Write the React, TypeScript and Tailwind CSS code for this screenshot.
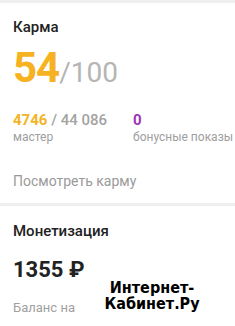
import React from 'react';

const App: React.FC = () => {
  return (
    <div className="w-[235px] h-[326px] overflow-hidden bg-[#efefef] pt-[3px] flex flex-col gap-[3px] font-['Roboto',sans-serif]">
      {/* karma */}
      <div className="bg-white h-[200px] shrink-0 px-[13px] pt-[14px] flex flex-col">
        <h2 className="text-[15px] leading-[20px] font-medium text-[#222]">Карма</h2>
        <div className="mt-[10px] leading-[42px] flex items-baseline">
          <span className="text-[42px] font-bold tracking-[-1px] text-[#f6b220]">54</span>
          <span className="text-[28px] text-[#b5b5b5]">/100</span>
        </div>
        <div className="mt-[17px] flex">
          <div className="w-[120px] shrink-0">
            <div className="text-[15px] leading-[18px] font-medium">
              <span className="font-bold text-[#f2b526]">4746</span>
              <span className="text-[#a3a3a3]"> / 44 086</span>
            </div>
            <div className="text-[12px] leading-[16px] text-[#9e9e9e]">мастер</div>
          </div>
          <div className="whitespace-nowrap">
            <div className="text-[15px] leading-[18px] font-bold text-[#9c34b5]">0</div>
            <div className="text-[12px] leading-[16px] text-[#9e9e9e]">бонусные показы</div>
          </div>
        </div>
        <div className="mt-[26px] text-[14px] leading-[20px] text-[#9a9a9a]">Посмотреть карму</div>
      </div>

      {/* monetization */}
      <div className="relative bg-white flex-1 px-[13px] pt-[15px] flex flex-col">
        <h2 className="text-[15px] leading-[20px] font-medium text-[#222]">Монетизация</h2>
        <div className="mt-[15px] text-[22px] leading-[28px] font-bold text-[#222]">1355 ₽</div>
        <div className="mt-[15px] text-[13px] leading-[18px] text-[#a0a0a0]">Баланс на</div>

        <div className="absolute left-[100px] top-[74px] w-[104px] text-center font-['DejaVu_Sans',sans-serif] font-bold [font-stretch:condensed] text-[16px] leading-[16px] text-black">
          <div>Интернет-</div>
          <div>Кабинет.Ру</div>
        </div>
      </div>
    </div>
  );
};

export default App;
